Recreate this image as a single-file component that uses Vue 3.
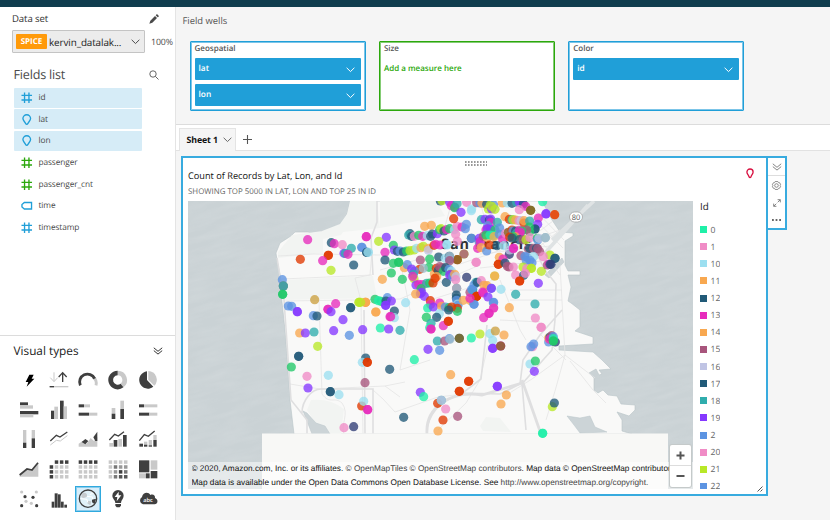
<script setup>
const fields = [
  { name: 'id', icon: 'hash', tone: 'blue', selected: true },
  { name: 'lat', icon: 'pin', tone: 'blue', selected: true },
  { name: 'lon', icon: 'pin', tone: 'blue', selected: true },
  { name: 'passenger', icon: 'hash', tone: 'green' },
  { name: 'passenger_cnt', icon: 'hash', tone: 'green' },
  { name: 'time', icon: 'tag', tone: 'blue' },
  { name: 'timestamp', icon: 'hash', tone: 'blue' }
]

const wells = [
  { title: 'Geospatial', items: ['lat', 'lon'] },
  { title: 'Size', items: [], hint: 'Add a measure here' },
  { title: 'Color', items: ['id'] }
]

const palette = {
  a: '#1ff0a8', p: '#f08cc6', l: '#9cdff0', o: '#f8a850', n: '#215a78', m: '#e72cbc',
  r: '#a8557c', v: '#c0c4e4', t: '#30adad', u: '#8538ff', b: '#5c94e2', g: '#b8e828',
  e: '#20c868', d: '#e03800', s: '#303c74', k: '#806820', w: '#cca040', h: '#9dbccb'
}

const legend = [
  ['0', 'a'], ['1', 'p'], ['10', 'l'], ['11', 'o'], ['12', 'n'], ['13', 'm'], ['14', 'o'], ['15', 'r'],
  ['16', 'v'], ['17', 'n'], ['18', 't'], ['19', 'u'], ['2', 'b'], ['20', 'p'], ['21', 'g'], ['22', 'b']
]

// Each tile has an origin and points in thirds of a pixel: "x,y,colour".
const tiles = [
  { x: 180, y: 195, pts: '383,134,m 361,193,d 454,143,n 463,146,m 487,149,p 514,160,t 546,157,b 559,125,m 560,172,n 565,172,l 492,175,u 496,175,t 504,178,m 445,181,d 445,181,d 428,197,m 521,210,n 453,226,g 307,254,b 310,273,e 310,273,r 310,273,t 308,298,e 308,298,e 404,314,w 325,333,b 335,334,b 352,350,u 352,350,u 467,326,m 444,343,m 444,343,m 453,350,u 512,338,n 512,338,n 537,322,g 537,322,g 557,322,o 557,322,o 588,351,o 400,362,b 411,363,n 489,374,u 461,407,u 548,404,u 508,421,b 359,414,o 376,414,u 402,411,t 413,454,g' },
  { x: 180, y: 340, pts: '356,49,n 356,49,n 334,81,e 381,109,p 384,144,u 445,106,l 451,155,n 451,155,n 477,164,l 557,54,n 547,67,l 562,67,d 562,67,d 629,88,n 555,128,r 545,198,d 551,184,l 563,209,m 563,209,m 492,263,p 521,260,s' },
  { x: 360, y: 195, pts: '19,125,m 79,127,u 56,139,g 5,157,b 20,172,n 24,172,l 75,172,m 75,195,n 100,151,e 100,205,e 94,234,e 67,253,o 127,253,e 133,218,o 142,209,b 116,202,e 116,202,e 181,195,r 103,165,u 112,169,n 120,168,b 130,171,n 140,168,e 150,167,g 162,165,g 170,160,l 183,158,o 190,154,g 150,116,n 146,120,t 155,124,n 163,124,p 176,121,e 188,124,m 194,94,o 214,91,o 202,122,l 212,124,n 217,117,n 232,116,u 239,104,e 243,101,g 252,108,n 260,104,m 269,101,e 283,104,l 291,94,p 306,96,m 316,101,b 319,88,b 281,71,d 241,18,n 246,17,g 269,22,u 274,32,m 284,36,m 284,38,e 291,26,t 303,52,u 334,47,l 320,22,p 205,160,o 205,166,v 222,151,d 227,148,m 240,150,m 261,150,l 261,148,l 287,118,p 292,139,p 334,130,n 357,140,b 312,177,g 312,177,r 292,194,d 292,194,k 349,202,p 353,160,m 209,192,e 236,186,n 256,190,l 268,184,n 268,192,b 269,184,h 269,197,r 207,217,e 179,223,d 190,220,h 163,228,b 155,222,u 160,238,t 162,251,g 158,244,m 168,270,u 176,268,m 187,269,m 200,265,t 209,264,e 219,264,d 183,281,e 185,292,u 181,296,u 167,297,o 193,304,u 223,237,o 229,220,d 235,226,n 239,215,r 247,218,r 250,229,e 257,218,n 267,223,b 274,228,l 272,238,r 230,245,o 225,250,d 259,262,n 269,240,u 278,245,b 284,238,o 288,245,v 287,254,p 290,280,r 290,280,h 320,247,s 289,300,n 289,309,n 290,316,b 293,327,l 294,331,b 292,340,d 292,349,e 310,316,o 332,317,o 342,327,b 330,292,r 338,285,b 338,284,t 349,304,d 349,304,d 211,317,d 239,324,m 212,328,m 203,339,a 220,336,u 245,334,o 256,336,b 267,338,e 275,336,d 266,345,n 238,356,l 230,367,n 199,367,e 265,379,d 213,385,t 250,392,m 45,313,e 63,319,e 55,317,a 16,322,o 2,322,g 82,308,b 78,318,n 94,318,u 77,331,u 77,331,u 137,323,l 47,351,o 103,348,n 90,365,m 103,368,l 92,365,m 61,399,a 86,402,u' },
  { x: 470, y: 195, pts: '5,42,l 20,23,r 30,24,b 36,25,o 50,28,n 61,30,g 71,30,b 55,42,g 65,42,u 75,43,g 65,34,g 97,24,o 112,24,l 126,25,n 140,22,t 148,22,u 154,25,u 160,27,n 167,34,m 148,44,p 182,46,k 182,46,k 218,20,a 34,74,t 45,73,u 58,75,n 62,72,u 62,83,m 82,82,t 53,92,b 48,104,m 52,101,u 62,103,u 75,105,e 89,99,b 105,65,o 118,73,d 126,74,t 129,74,g 137,75,o 147,77,p 153,77,v 162,84,d 162,77,o 179,78,t 205,69,m 228,57,u 228,56,u 254,59,o 254,59,d 203,88,u 195,102,n 195,102,n 178,96,e 179,110,e 170,105,r 5,130,b 28,130,u 31,140,m 40,124,r 52,128,o 48,120,e 60,120,a 70,122,a 72,125,o 88,118,b 98,133,m 107,115,p 115,112,k 126,105,d 129,108,b 137,108,n 139,115,t 148,106,m 155,108,e 149,116,m 151,111,m 136,125,o 129,125,e 119,126,d 126,129,n 148,134,n 160,134,r 168,134,g 180,128,p 202,130,e 203,135,b 207,130,v 226,128,h 226,128,h 33,158,o 50,168,b 58,150,d 81,152,n 101,152,l 118,178,s 119,165,v 130,161,m 131,159,m 175,161,r 179,160,n 191,160,r 200,160,n 209,170,r 203,161,r 240,180,g 220,185,p 18,202,p 88,187,o 99,192,m 85,208,d 85,208,d 105,204,n 112,214,r 117,216,r 130,216,p 153,182,r 165,184,b 172,187,b 191,185,l 169,197,b 180,196,b 186,203,b 159,216,g 170,221,p 184,220,g 184,220,g 214,229,g 232,210,r 237,207,m 240,208,n 255,190,n 255,190,n 243,208,s 137,240,p 161,241,n 166,235,p 149,258,d 149,258,d 74,243,g 74,243,o 205,265,u 18,262,t 12,270,b 22,262,n 34,257,p 42,271,o 51,272,o 64,280,b 64,280,u 5,283,b 20,304,d 20,304,d 38,291,m 40,294,m 54,306,u 71,322,b 70,323,b 93,283,l 137,298,t 12,328,b 0,310,m 71,339,p 71,339,m 118,338,o 195,327,t 57,355,m 57,355,m 41,368,m 196,369,p 214,397,p' },
  { x: 400, y: 320, pts: '145,4,d 89,23,a 93,27,m 93,27,m 0,31,t 112,63,t 134,63,r 148,56,b 150,58,h 178,55,n 178,55,k 214,54,a 240,42,g 270,41,l 278,61,l 286,33,w 312,45,o 278,85,u 278,85,u 302,78,r 302,78,m 302,78,k 84,88,u 119,91,b 43,119,a 152,164,o 206,184,d 206,184,d 178,214,d 178,214,d 61,217,u 71,230,a 113,250,d 124,241,t 124,241,v 137,267,p 129,300,d 173,289,r 114,333,o 11,292,n 292,199,u 292,199,u 319,225,o 303,252,o 423,22,p 446,66,b 466,66,s 446,54,o 450,51,n 455,47,r 449,58,m 460,50,b 460,56,a 460,63,e 460,63,e 398,80,p 393,80,b 401,72,b 390,132,l 406,123,e 403,154,u 457,260,g 463,249,n 428,340,a 428,340,a' }
]

const dots = tiles.flatMap(t => t.pts.split(' ').map(s => {
  const [x, y, c] = s.split(',')
  return { x: t.x + x / 3, y: t.y + y / 3, c: palette[c] }
}))

const D = '#3f3f3f'
const L = '#c9c9c9'
const rect = (x, y, w, h, c) => `<rect x="${x}" y="${y}" width="${w}" height="${h}" fill="${c}"/>`
const path = (d, c, w) => w
  ? `<path d="${d}" fill="none" stroke="${c}" stroke-width="${w}"/>`
  : `<path d="${d}" fill="${c}"/>`
const circle = (x, y, r, c) => `<circle cx="${x}" cy="${y}" r="${r}" fill="${c}"/>`
const cells = tone => {
  let out = ''
  for (let r = 0; r < 4; r++) for (let c = 0; c < 4; c++) {
    const color = tone(r, c)
    if (color) out += rect(2 + c * 15.3, 4 + r * 14.7, 10.5, 10.5, color)
  }
  return out
}
const heat = [[L, L, L, L], [L, '#777', '#999', '#999'], [L, '#999', D, '#777'], [L, '#777', '#555', '#555']]

const visuals = [
  path('M31 14H44L38 26H46L23 50L28 36H20Z', '#000'),
  path('M15 7V34M4 23L15 35L26 23', L, 3) + path('M41 36V8M29 21L41 8L53 21', D, 4) + rect(2, 48, 56, 4, L) + rect(2, 48, 13, 4, D),
  path('M45 21A24 24 0 0 1 54 46', L, 8.5) + path('M7 46A23.5 23.5 0 0 1 50 26', D, 8.5),
  path('M29 9A21 21 0 0 1 42 46.5', L, 14) + path('M42 46.5A21 21 0 1 1 29 9', D, 14),
  path('M27 4A26 26 0 1 0 46 50L27 30Z', D) + path('M31 3A26 26 0 0 1 49 47L31 29Z', L),
  rect(3, 7, 24, 9, D) + rect(3, 16, 39, 10, L) + rect(3, 33, 55, 10, D) + rect(3, 43, 40, 9, L),
  rect(6, 32, 10, 25, D) + rect(16, 20, 11, 37, L) + rect(33, 2, 11, 55, D) + rect(44, 19, 10, 38, L),
  rect(2, 13, 16, 9, D) + rect(18, 13, 18, 9, L) + rect(2, 38, 31, 9, D) + rect(33, 38, 25, 9, L),
  rect(11, 24, 11, 17, L) + rect(11, 41, 11, 16, D) + rect(37, 2, 11, 25, L) + rect(37, 27, 11, 30, D),
  rect(3, 13, 15, 9, D) + rect(18, 13, 40, 9, L) + rect(3, 38, 31, 9, D) + rect(34, 38, 24, 9, L),
  rect(12, 3, 10, 38, L) + rect(12, 41, 10, 16, D) + rect(38, 3, 10, 25, L) + rect(38, 28, 10, 29, D),
  path('M4 48L22 34L34 36L55 20', L, 3) + path('M4 36L22 19L33 24L55 9', D, 4),
  path('M2 53V44L14 36L26 44L38 27L48 36L58 24V53Z', L) + path('M11 39L22 30L31 36L22 46Z', D) + path('M46 25L58 8V36L52 36Z', D),
  rect(4, 42, 11, 11, L) + rect(17, 33, 11, 20, D) + rect(31, 30, 11, 23, L) + rect(45, 18, 11, 35, D) + path('M4 33L20 16L31 21L48 8', D, 4),
  rect(4, 44, 11, 9, D) + rect(18, 38, 10, 9, L) + rect(18, 47, 10, 6, D) + rect(32, 33, 10, 16, L) + rect(32, 49, 10, 4, D) + rect(46, 18, 10, 15, L) + rect(46, 33, 10, 20, D) + path('M4 35L19 17L31 22L50 6', D, 4),
  path('M2 51V45L24 31L39 35L58 12V53H2Z', L) + path('M2 48L24 30L39 33L57 11', D, 5),
  cells((r, c) => r === 0 && c === 0 ? null : r === 0 || c === 0 ? D : L),
  cells(r => r === 0 ? D : L),
  cells((r, c) => heat[r][c]),
  rect(3, 4, 31, 36, D) + rect(38, 4, 20, 28, L) + rect(3, 43, 18, 15, L) + rect(23, 43, 12, 15, D) + rect(38, 36, 20, 22, D),
  [[8, 9, L], [52, 9, L], [18, 23, D], [42, 25, D], [21, 37, L], [37, 43, L], [8, 50, D], [53, 50, D]].map(p => circle(p[0], p[1], 4.8, p[2])).join(''),
  rect(8, 38, 8, 18, D) + rect(17, 13, 9, 43, D) + rect(27, 16, 8, 40, D) + rect(36, 38, 8, 18, D) + rect(46, 47, 8, 9, D),
  circle(30, 29, 26, '#e0f1f8') + path('M11 14C20 8 29 13 27 22C21 28 15 28 10 24ZM28 35L40 37L37 49L29 44Z', '#c6cbce') + path('M40 5L44 13L35 17M27 22L43 24L44 32M8 29L27 31L29 40', '#fff', 3) + path('M42 32L54 29L50 44C43 43 41 38 42 32Z', D) + '<circle cx="30" cy="29" r="26" fill="none" stroke="#3f3f3f" stroke-width="4"/>',
  path('M30 3A17 17 0 0 1 47 20C47 29 39 33 39 42H22C22 33 13 29 13 20A17 17 0 0 1 30 3ZM22 45H39V50L35 55H26L22 50Z', D) + path('M32 8L20 24H28L26 37L40 19H32Z', '#fff'),
  path('M15 46A12 12 0 0 1 12 24C15 9 32 8 37 18C45 14 52 19 51 27C62 31 60 46 50 46Z', D) + '<text x="30" y="39" text-anchor="middle" font-size="17" font-family="Open Sans, sans-serif" font-weight="600" fill="#fff">abc</text>'
]
</script>

<template>
  <div class="app">
    <div class="topbar"></div>
    <div class="body">
      <aside class="side">
        <section class="data">
          <div class="ds-head">
            <span>Data set</span>
            <svg class="pencil" viewBox="0 0 30 30"><path d="M1 29L4 20L18 6L24 12L10 26ZM20 4L23 1Q25 0 27 3L29 5Q30 7 28 9L26 10Z" fill="#4a4a4a" /></svg>
          </div>
          <div class="ds-row">
            <div class="select">
              <b class="spice">SPICE</b>
              <span class="ds-name">kervin_datalak...</span>
              <svg class="chev" viewBox="0 0 10 6"><path d="M.7 .8L5 5L9.3 .8" /></svg>
            </div>
            <span class="pct">100%</span>
          </div>
          <div class="fl-head">
            <span>Fields list</span>
            <svg class="search" viewBox="0 0 10 10"><circle cx="4" cy="4" r="3.2" /><path d="M6.4 6.4L9.5 9.5" /></svg>
          </div>
          <ul class="fields">
            <li v-for="f in fields" :key="f.name" :class="[f.tone, { selected: f.selected }]">
              <svg viewBox="0 0 12 12">
                <path v-if="f.icon === 'hash'" d="M3.7 .5V11.5M8.3 .5V11.5M.5 3.5H11.5M.5 8.3H11.5" />
                <path v-else-if="f.icon === 'pin'" d="M6 .8C3.7 .8 2 2.5 2 4.8C2 7 4.2 8 4.7 9.8Q6 12 7.3 9.8C7.8 8 10 7 10 4.8C10 2.5 8.3 .8 6 .8Z" />
                <path v-else d="M3.5 2.6H11V9.4H3.5L1 7.2V4.8Z" />
              </svg>
              <span>{{ f.name }}</span>
            </li>
          </ul>
        </section>
        <section class="types">
          <div class="vt-head">
            <span>Visual types</span>
            <svg class="dbl" viewBox="0 0 10 8"><path d="M.8 .8L5 4.3L9.2 .8M.8 3.6L5 7.1L9.2 3.6" /></svg>
          </div>
          <div class="vt-grid">
            <div v-for="(v, i) in visuals" :key="i" :class="['vt', { on: i === 22 }]">
              <svg viewBox="0 0 60 60" v-html="v"></svg>
            </div>
          </div>
        </section>
      </aside>

      <main class="main">
        <section class="wells-area">
          <div class="fw-title">Field wells</div>
          <div class="wells">
            <div v-for="w in wells" :key="w.title" :class="['well', { measure: w.hint }]">
              <div class="well-title">{{ w.title }}</div>
              <div v-for="it in w.items" :key="it" class="pill">
                <span>{{ it }}</span>
                <svg class="chev" viewBox="0 0 10 6"><path d="M.7 .8L5 5L9.3 .8" /></svg>
              </div>
              <div v-if="w.hint" class="hint">{{ w.hint }}</div>
            </div>
          </div>
        </section>

        <nav class="tabs">
          <div class="tab">
            <b>Sheet 1</b>
            <svg class="chev" viewBox="0 0 10 6"><path d="M.7 .8L5 5L9.3 .8" /></svg>
          </div>
          <svg class="plus" viewBox="0 0 10 10"><path d="M5 0V10M0 5H10" /></svg>
        </nav>

        <section class="canvas">
          <div class="visual">
            <svg class="grip" viewBox="0 0 22 5"><path d="M0 1H22M0 4H22" stroke="#777" stroke-width="1.3" stroke-dasharray="1.6 1.4" /></svg>
            <header class="v-head">
              <div>
                <div class="v-title">Count of Records by Lat, Lon, and Id</div>
                <div class="v-sub">SHOWING TOP 5000 IN LAT, LON AND TOP 25 IN ID</div>
              </div>
              <svg class="redpin" viewBox="0 0 8 11"><path d="M4 1C2.2 1 .9 2.3 .9 4C.9 6 2.6 6.8 3 8.8Q4 10.4 5 8.8C5.4 6.8 7.1 6 7.1 4C7.1 2.3 5.8 1 4 1Z" /></svg>
            </header>
            <div class="v-body">
              <div class="map">
                <svg viewBox="188 201 505 288">
                  <defs>
                    <filter id="grain" x="0" y="0" width="100%" height="100%">
                      <feTurbulence type="fractalNoise" baseFrequency=".03 .16" numOctaves="3" seed="4" />
                      <feColorMatrix values="0 0 0 0 1  0 0 0 0 1  0 0 0 0 1  .7 0 0 0 -.23" />
                    </filter>
                  </defs>
                  <rect x="188" y="201" width="505" height="288" fill="#cad2d5" />
                  <g transform="rotate(-14 440 345)"><rect x="150" y="100" width="600" height="500" filter="url(#grain)" opacity=".25" /></g>
                  <path class="land" d="M350 201L348 212L342 223L338 227L332 229L325 232L315 234L308 232L295 232L291 236L280 243L276 253L277 260L280 275L282 302L285 330L287 355L290 400L294 434H632L622 431L622 420L617 412L629 416L635 410V405L621 404L617 396L608 395L603 390L598 393L594 390V378L589 373L596 369L599 375L602 374L599 370L611 369L602 360L593 352L559 350V346L593 344V337L575 331L580 327V310L571 303L568 301L571 287L568 275L580 275V271L568 271L565 265V241L573 236V233L560 232L552 220L542 201Z" />
                  <path class="park" d="M350 201L347 214L340 224L322 231L323 239L341 235L343 232L380 228L377 201ZM323 231L292 235L278 252L278 258L323 253ZM281 280L373 276L377 298L284 300ZM380 201V228L445 216L436 201ZM311 400Q330 398 344 409L341 434H323L307 410ZM480 426L486 417L500 418L511 432L483 431Z" />
                  <path class="inlet" d="M303 411L307 413L316 423L325 426L330 434H312ZM567 416L580 418L590 416L595 427L607 432L580 433L574 425ZM545 275L562 258L564 262L549 278Z" />
                  <path class="minor" d="M278 256L313 254L380 255M282 279L350 276L372 275M284 301L355 300L400 299L430 286L480 265M319 301L322 394M363 434L361 301L355 278L370 275L372 250M290 384L320 389L385 386L405 382M322 394C330 405 334 396 342 403C350 414 340 425 344 434M385 386L400 397M373 390L383 399L395 412L438 397L472 393M430 320V300L500 278M438 430L466 403L480 380L488 345M400 260L410 310L400 370L430 360M508 394L532 379L565 355L595 378M560 265L565 355L555 391L546 420M500 320L540 322M535 240L560 275M570 361L593 390L606 403M540 334L566 360M380 270L420 259L460 264L560 230M480 201L490 240M500 280L520 330L526 340M452 201L444 230" />
                  <path class="minor" d="M515 215L560 262M524 208L563 248M530 205L564 240M560 230L520 262M553 221L508 255M546 211L500 246M510 290H562M510 300H562M480 254L550 246M480 268L550 260" />
                  <path class="road" d="M277 258L284 300L291 400L307 420V434M377 201V222L371 238L373 275M302 413C302 400 312 389 321 389H373V434M365 434L364 310M460 393L500 394L520 384L523 360L540 335L562 310M526 430L522 384L543 360L552 350L555 320L556 284L545 270L530 240M427 434C427 415 440 400 460 395L481 379L487 325" />
                  <path class="road big" d="M522 380L541 434M427 434C425 408 450 390 482 395L522 383" />
                  <path d="M545 253L588 205M552 240L594 201" fill="none" stroke="#dfe3e4" stroke-width="3.5" />
                  <text class="city" x="441" y="248.5">San Francis</text>
                  <g class="shield">
                    <rect x="569.5" y="212" width="13" height="10" rx="5" />
                    <text x="576" y="220">80</text>
                  </g>
                  <rect x="262" y="433.5" width="406" height="56" fill="#f8f8f6" />
                  <circle v-for="(d, i) in dots" :key="i" :cx="d.x" :cy="d.y" r="4.6" :fill="d.c" fill-opacity=".78" />
                  <rect x="188" y="462" width="505" height="27" fill="#fff" opacity=".5" />
                </svg>
                <div class="credits">
                  <div class="c1">© 2020, Amazon.com, Inc. or its affiliates. <i>© OpenMapTiles © OpenStreetMap contributors</i>. Map data © OpenStreetMap contributors</div>
                  <div class="c2">Map data is available under the Open Data Commons Open Database License. See <i>http://www.openstreetmap.org/copyright.</i></div>
                </div>
                <div class="zoomer">
                  <svg viewBox="0 0 21 42"><path d="M0 20.5H21" stroke="#ddd" /><path d="M6.5 10.5H14.5M10.5 6.5V14.5M6.5 31H14.5" stroke="#555" stroke-width="2" /></svg>
                </div>
              </div>
              <div class="legend">
                <div class="lg-title">Id</div>
                <div v-for="l in legend" :key="l[0]" class="lg">
                  <i :style="{ background: palette[l[1]] }"></i><span>{{ l[0] }}</span>
                </div>
              </div>
            </div>
            <svg class="resize" viewBox="0 0 6 6"><path d="M.5 5.5L5.5 .5M3.5 5.5L5.5 3.5" /></svg>
          </div>
          <div class="menu">
            <div class="m1"><svg class="dbl" viewBox="0 0 10 8"><path d="M.8 .8L5 4.3L9.2 .8M.8 3.6L5 7.1L9.2 3.6" /></svg></div>
            <svg class="gear" viewBox="0 0 10 10"><path d="M3.5 .6H6.5L7.2 1.8L8.6 2L9.6 4.2L9 5L9.6 5.8L8.5 8L7.2 8.2L6.5 9.4H3.5L2.8 8.2L1.4 8L.4 5.8L1 5L.4 4.2L1.5 2L2.8 1.8Z" /><circle cx="5" cy="5" r="2" /></svg>
            <svg class="expand" viewBox="0 0 8 8"><path d="M4.7 3.3L7.2 .8M4.6 .7H7.3V3.4M3.3 4.7L.8 7.2M.7 4.6V7.3H3.4" /></svg>
            <svg class="more" viewBox="0 0 10 2"><path d="M0 1H2M4 1H6M8 1H10" /></svg>
          </div>
        </section>
      </main>
    </div>
  </div>
</template>

<style>
body { margin: 0; overflow: hidden; }
</style>

<style scoped>
* { box-sizing: border-box; }
.app { width: 830px; height: 520px; overflow: hidden; display: flex; flex-direction: column; font-family: "Open Sans", "Noto Sans", sans-serif; color: #4a4a4a; background: #f5f5f5; white-space: nowrap; text-rendering: geometricPrecision; }
svg { display: block; flex: none; overflow: visible; }
.topbar { height: 7px; background: #103d4e; flex: none; }
.body { flex: 1; display: flex; min-height: 0; }
.side { width: 176px; flex: none; background: #fff; border-right: 1px solid #e4e4e4; display: flex; flex-direction: column; }
.data { height: 329px; flex: none; border-bottom: 1px solid #dcdcdc; }
.ds-head { height: 23px; padding: 0 16px 0 12px; display: flex; justify-content: space-between; align-items: center; font-size: 10px; letter-spacing: -.2px; color: #333; }
.ds-head span { font-size: 9.6px; letter-spacing: -.1px; }
.pencil { width: 10px; height: 10px; }
.ds-row { display: flex; align-items: center; padding-left: 12px; height: 23px; }
.select { width: 133px; height: 23px; border: 1px solid #c4c4c4; background: #ececec; display: flex; align-items: center; padding: 0 4px 0 3px; border-radius: 1px; }
.spice { width: 31px; height: 15px; line-height: 15px; background: #ff9a0a; color: #fff; font-size: 8px; text-align: center; border-radius: 1px; }
.ds-name { margin-left: 2px; font-size: 9.9px; color: #222; flex: 1; letter-spacing: -.1px; }
.chev { width: 9px; height: 5.5px; fill: none; stroke: currentColor; stroke-width: 1.1; }
.pct { margin-left: 6px; font-size: 8.8px; letter-spacing: -.1px; }
.fl-head { margin-top: 9px; height: 25.5px; display: flex; align-items: center; justify-content: space-between; padding: 0 16px 0 13.5px; font-size: 12.6px; letter-spacing: -.2px; }
.search { width: 10px; height: 10px; fill: none; stroke: #555; stroke-width: .9; }
.fields { margin: 0; padding: 0 0 0 13.5px; list-style: none; }
.fields li { width: 128.5px; height: 20.3px; margin-bottom: 1.37px; display: flex; align-items: center; padding-left: 7px; border-radius: 1px; font-size: 8.3px; letter-spacing: -.1px; }
.fields li.selected { background: #d6ecf7; }
.fields svg { width: 11.5px; height: 11.5px; margin-right: 6.5px; fill: none; stroke: #209fd8; stroke-width: 1.4; }
.fields .green svg { stroke: #2ca80c; }
.vt-head { height: 29px; padding: 0 12px 0 13.5px; display: flex; justify-content: space-between; align-items: center; font-size: 11.8px; font-weight: 500; color: #222; }
.dbl { width: 10px; height: 8px; fill: none; stroke: #333; stroke-width: 1; }
.vt-grid { padding-left: 14.2px; display: grid; grid-template-columns: repeat(5, 29.7px); grid-auto-rows: 29.7px; }
.vt { width: 26px; height: 26px; display: flex; align-items: center; justify-content: center; place-self: center; border: 1px solid transparent; }
.vt svg { width: 20px; height: 20px; }
.vt.on { background: #d8eefa; border-color: #2fa9de; box-shadow: inset 0 0 0 1px #8accec; }
.main { flex: 1; min-width: 0; display: flex; flex-direction: column; }
.wells-area { height: 118px; flex: none; border-bottom: 1px solid #dcdcdc; padding: 0 0 0 13.5px; }
.fw-title { height: 27px; line-height: 27px; margin: 0 0 6.6px -7px; font-size: 9.4px; color: #555; }
.wells { display: flex; gap: 13.4px; }
.well { width: 176px; flex: none; height: 70.4px; background: #fff; border: 1px solid #209fd8; border-radius: 1px; box-shadow: inset 0 0 0 1px #7cc5e8; padding: 0 4px; }
.well.measure { border-color: #2ca80c; box-shadow: inset 0 0 0 1px #84cc74; }
.well-title { height: 16.6px; line-height: 14.5px; font-size: 8px; font-weight: 600; color: #555; }
.pill { height: 22px; margin-bottom: 3.8px; background: #209fd8; border-radius: 1px; color: #fff; display: flex; align-items: center; justify-content: space-between; padding: 0 6px 1px 4px; font-size: 8.3px; font-weight: 600; }
.pill .chev { margin-top: 3px; }
.hint { height: 22px; line-height: 21px; color: #2ca80c; font-size: 8px; font-weight: 600; }
.tabs { height: 26px; flex: none; background: #fff; border-bottom: 1px solid #e2e2e2; display: flex; align-items: flex-start; padding: 3px 0 0 3px; }
.tab { height: 23px; width: 57px; background: #f5f5f5; border: 1px solid #e4e4e4; border-bottom: 0; display: flex; align-items: center; gap: 5px; padding-left: 6.5px; color: #666; }
.tab b { font-size: 8.8px; color: #111; letter-spacing: -.1px; }
.plus { width: 9px; height: 9px; margin: 7px 0 0 6.5px; fill: none; stroke: #555; stroke-width: 1.2; }
.canvas { flex: 1; display: flex; align-items: flex-start; padding: 5px 0 0 5px; }
.visual { position: relative; width: 587px; height: 340px; border: 2px solid #38abdf; background: #fff; padding: 0 0 0 5px; display: flex; flex-direction: column; }
.grip { position: absolute; left: 281.5px; top: 3px; width: 22px; height: 5px; }
.v-head { height: 43px; flex: none; display: flex; justify-content: space-between; padding: 8.5px 12px 0 0; }
.v-title { height: 18px; line-height: 18px; font-size: 9.2px; font-weight: 500; color: #111; }
.v-sub { height: 15px; line-height: 14px; font-size: 7.9px; color: #666; }
.redpin { width: 8px; height: 11px; margin-top: 1.5px; fill: none; stroke: #d81040; stroke-width: 1.3; }
.v-body { flex: 1; display: flex; min-height: 0; }
.map { position: relative; width: 505px; height: 288px; overflow: hidden; flex: none; }
.map > svg { width: 505px; height: 288px; }
.land { fill: #f9f9f8; stroke: #b9c4c8; stroke-width: .6; }
.park { fill: #f2f4f2; }
.inlet { fill: #ccd4d7; stroke: #b9c4c8; stroke-width: .5; }
.minor { fill: none; stroke: #e5e5e5; stroke-width: .8; }
.road { fill: none; stroke: #dfdfe0; stroke-width: 1.6; }
.road.big { stroke-width: 2.8; }
.city { font: 700 14.5px "Noto Sans", sans-serif; letter-spacing: .9px; fill: #333; }
.shield rect { fill: #fff; stroke: #999; stroke-width: .7; }
.shield text { font: 7.5px "Open Sans", sans-serif; fill: #555; text-anchor: middle; }
.credits { position: absolute; left: 3.5px; top: 261px; width: 479px; height: 27px; overflow: hidden; font-family: "Liberation Sans", Arial, sans-serif; font-size: 8.25px; line-height: 13.6px; color: #111; }
.credits i { font-style: normal; color: #444; }
.zoomer { position: absolute; left: 481.5px; top: 243.5px; width: 21px; height: 42px; background: #fff; border-radius: 2px; box-shadow: 0 0 0 1px #c5caca; }
.zoomer svg { width: 21px; height: 42px; }
.legend { margin-left: 7px; height: 288px; overflow: hidden; color: #666; }
.lg-title { height: 20px; line-height: 12px; font-size: 9.8px; font-weight: 500; color: #222; }
.lg { height: 17.13px; display: flex; align-items: center; gap: 3.5px; font-size: 8.6px; }
.lg i { width: 7px; height: 7px; }
.resize { position: absolute; right: 3px; bottom: 2px; width: 6px; height: 6px; fill: none; stroke: #555; stroke-width: 1; }
.menu { width: 20px; height: 74px; margin-left: -1px; border: 2px solid #38abdf; border-left-width: 1px; background: #fff; display: flex; flex-direction: column; align-items: center; position: relative; }
.m1 { width: 100%; height: 18px; border-bottom: 1px solid #ddd; display: flex; align-items: center; justify-content: center; }
.menu .dbl, .gear, .expand { fill: none; stroke: #777; stroke-width: .9; }
.gear { width: 9px; height: 9px; margin-top: 5px; }
.expand { width: 8px; height: 8px; margin-top: 9px; }
.more { width: 9px; height: 2px; margin-top: 12px; fill: none; stroke: #666; stroke-width: 2; }
</style>
